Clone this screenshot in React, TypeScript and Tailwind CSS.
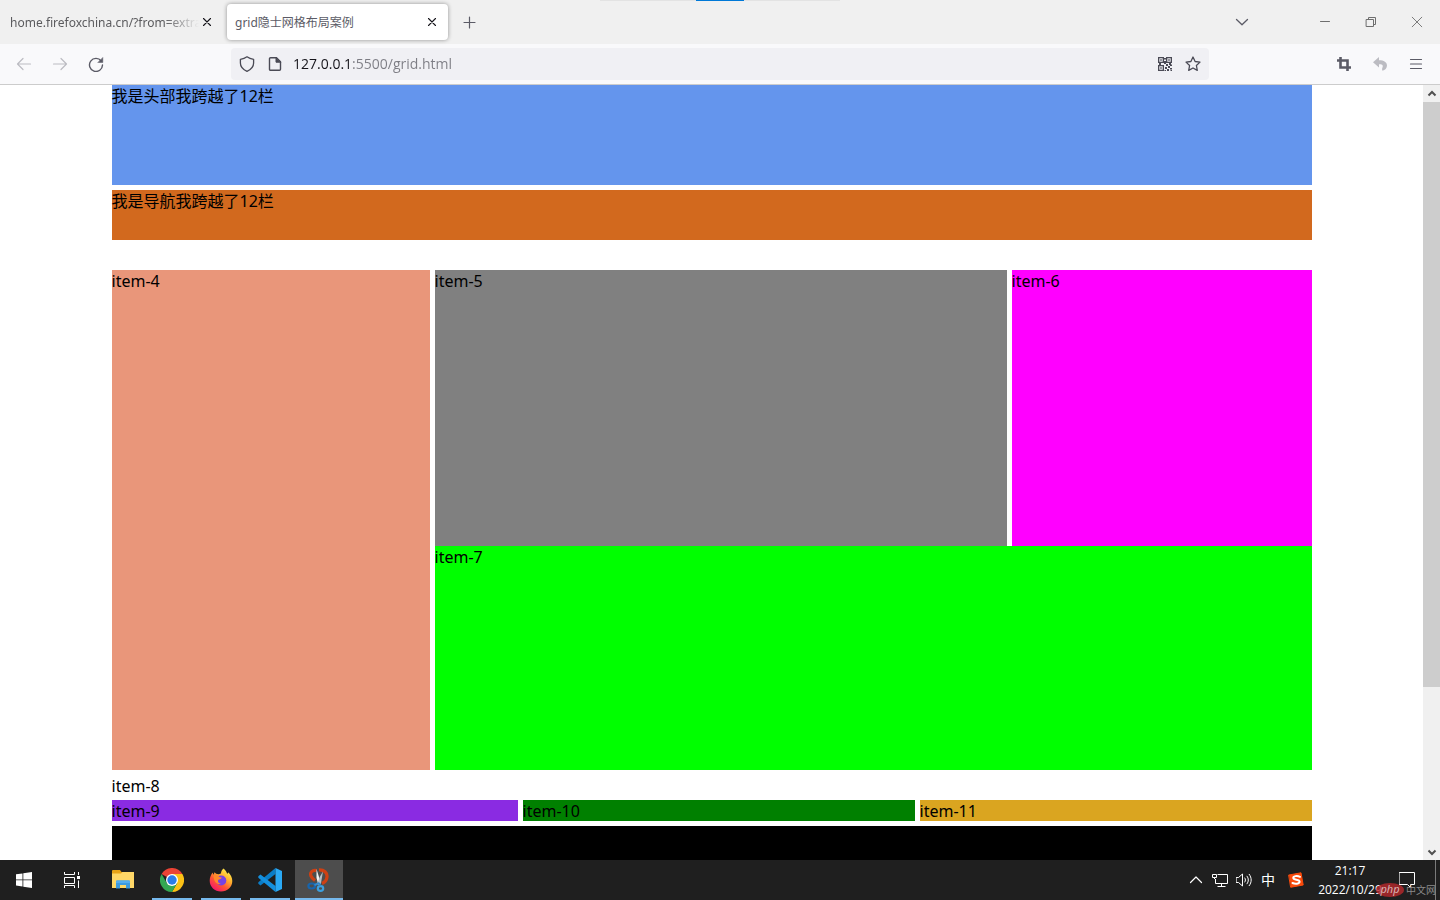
/**
 * Browser window on a desktop, showing a grid layout demo page.
 */

import React from 'react';

interface IconProps {
  className?: string;
  children: React.ReactNode;
  box?: string;
}

function Icon({ className = 'w-4 h-4', box = '0 0 16 16', children }: IconProps) {
  return (
    <svg
      className={className}
      viewBox={box}
      fill="none"
      stroke="currentColor"
      strokeLinecap="round"
      strokeLinejoin="round"
      aria-hidden="true"
    >
      {children}
    </svg>
  );
}

interface IconButtonProps {
  label: string;
  className?: string;
  children: React.ReactNode;
}

function IconButton({ label, className = '', children }: IconButtonProps) {
  return (
    <button type="button" aria-label={label} className={`flex shrink-0 items-center justify-center ${className}`}>
      {children}
    </button>
  );
}

function CloseMark() {
  return (
    <Icon>
      <path d="M4.5 4.500l7 7M11.500 4.500l-7 7" strokeWidth="1.1" />
    </Icon>
  );
}

/* Tabs and window controls */
function TabStrip() {
  return (
    <div className="relative flex h-11 shrink-0 items-center bg-[#f0f0f0]">
      <div className="absolute left-1/2 top-0 flex h-px w-60 -translate-x-1/2 justify-center bg-[#e3e3e3]">
        <div className="h-px w-12 bg-[#0078d7]" />
      </div>

      <div className="flex h-9 w-[223px] items-center pl-2.5 pr-2">
        <button
          type="button"
          className="min-w-0 flex-1 whitespace-nowrap pt-0.5 text-left text-xs text-[#5b5b5e] [mask-image:linear-gradient(to_right,black_82%,transparent)]"
        >
          home.firefoxchina.cn/?from=extra
        </button>
        <IconButton label="Close tab" className="w-4 text-[#15141a]">
          <CloseMark />
        </IconButton>
      </div>

      <div className="ml-1 flex h-9 w-[221px] items-center rounded bg-white px-2 shadow-[0_0_4px_rgba(0,0,0,0.4)]">
        <button type="button" className="min-w-0 flex-1 truncate pt-0.5 text-left text-xs text-[#5b5b66]">
          grid隐士网格布局案例
        </button>
        <IconButton label="Close tab" className="w-4 text-[#15141a]">
          <CloseMark />
        </IconButton>
      </div>

      <IconButton label="New tab" className="ml-[3px] h-9 w-9 text-[#5b5b66]">
        <Icon>
          <path d="M8.500 3v11M3 8.500h11" strokeWidth="1.2" />
        </Icon>
      </IconButton>

      <div className="flex-1" />

      <IconButton label="List all tabs" className="mr-[42px] h-9 w-9 text-[#5b5b66]">
        <Icon>
          <path d="M2.500 5.500L8 10.800l5.500-5.300" strokeWidth="1.3" />
        </Icon>
      </IconButton>
      <IconButton label="Minimize" className="h-9 w-[46px] text-[#6e6e6e]">
        <Icon>
          <path d="M3.500 7.500h9" />
        </Icon>
      </IconButton>
      <IconButton label="Restore" className="h-9 w-[46px] text-[#6e6e6e]">
        <Icon>
          <path d="M3.500 5.500h7v7h-7zM5.500 5V3.500h7v7H11" />
        </Icon>
      </IconButton>
      <IconButton label="Close" className="h-9 w-[46px] text-[#6e6e6e]">
        <Icon>
          <path d="M3.200 3.200l9.600 9.600M12.800 3.200l-9.600 9.600" strokeWidth="0.9" />
        </Icon>
      </IconButton>
    </div>
  );
}

function QrIcon() {
  return (
    <svg className="h-4 w-4" viewBox="0 0 16 16" fill="#4a4a55" aria-hidden="true">
      <path
        fillRule="evenodd"
        d="M1 1h6v6H1zM2.300 2.300v3.400h3.400V2.300zM9 1h6v6H9zM10.300 2.300v3.400h3.400V2.300zM1 9h6v6H1zM2.300 10.300v3.400h3.400v-3.400z"
      />
      <path d="M3.300 3.300h1.400v1.400H3.300zM11.300 3.300h1.400v1.400h-1.400zM3.300 11.300h1.400v1.400H3.300zM7 2h2v1.400H7zM7 5h2v3H7zM2 7h2v2H2zM12 7h2v2h-2zM9 8h2v2H9zM11 10h2v2h-2zM13 8.500h2V10h-2zM8 11h2v2H8zM10 13h2v2h-2zM13 12h2v1.500h-2zM7.500 14H9v1H7.500zM13.500 14H15v1h-1.500z" />
    </svg>
  );
}

function Toolbar() {
  return (
    <div className="flex h-[41px] shrink-0 items-center border-b border-[#cccccc] bg-[#f9f9fb] px-1.5">
      <IconButton label="Back" className="h-9 w-9 text-[#bcbcc2]">
        <Icon>
          <path d="M14.500 8H1.500M7 2.500L1.500 8 7 13.500" strokeWidth="1.2" />
        </Icon>
      </IconButton>
      <IconButton label="Forward" className="h-9 w-9 text-[#bcbcc2]">
        <Icon>
          <path d="M1.500 8h13M9 2.500L14.500 8 9 13.500" strokeWidth="1.2" />
        </Icon>
      </IconButton>
      <IconButton label="Reload" className="h-9 w-9 text-[#5b5b66]">
        <Icon>
          <path d="M13.200 5A6.500 6.500 0 1 0 14.500 9" strokeWidth="1.4" />
          <path d="M14.800 1.800v4.700h-4.700z" fill="currentColor" strokeWidth="0.5" />
        </Icon>
      </IconButton>

      <div className="ml-[117px] mr-[117px] flex h-8 flex-1 items-center rounded bg-[#f0f0f4] px-2 text-[#4a4a55]">
        <IconButton label="Tracking protection" className="w-4">
          <Icon>
            <path d="M8 .8C10 2.300 12.200 3 14.600 3.300V7c0 3.500-2.500 6.500-6.600 8.300C3.900 13.500 1.400 10.500 1.400 7V3.300C3.800 3 6 2.300 8 .8z" strokeWidth="1.3" />
          </Icon>
        </IconButton>
        <IconButton label="Site information" className="ml-3 w-4">
          <Icon>
            <path d="M3.500 1.700h6l4 4v7.600a1 1 0 0 1-1 1h-9a1 1 0 0 1-1-1V2.700a1 1 0 0 1 1-1z" strokeWidth="1.4" />
            <path d="M9 1.700v4.500h4.500z" fill="currentColor" strokeWidth="1" />
          </Icon>
        </IconButton>
        <input
          type="text"
          aria-label="Address"
          defaultValue="127.0.0.1:5500/grid.html"
          className="ml-2.5 h-8 min-w-0 flex-1 bg-[linear-gradient(to_right,#15141a_58px,#7d7d84_58px)] bg-clip-text pb-0.5 font-['Open_Sans','Noto_Sans',sans-serif] text-sm text-transparent outline-none"
        />
        <IconButton label="QR code" className="w-4">
          <QrIcon />
        </IconButton>
        <IconButton label="Bookmark this page" className="ml-3 w-4">
          <Icon>
            <path d="M8 1l2.100 4.500 4.900.6-3.600 3.400.9 4.900L8 12l-4.300 2.400.9-4.900L1 6.100l4.900-.6z" strokeWidth="1.3" />
          </Icon>
        </IconButton>
      </div>

      <IconButton label="Screenshot" className="h-9 w-9 text-[#5b5b66]">
        <Icon>
          <path d="M4.500 1v10.500H15M1 4.500h10.500V15" strokeWidth="2.600" strokeLinecap="butt" strokeLinejoin="miter" />
        </Icon>
      </IconButton>
      <IconButton label="Undo close tab" className="h-9 w-9 text-[#bcbcc2]">
        <svg className="h-4 w-4" viewBox="0 0 16 16" fill="currentColor" aria-hidden="true">
          <path d="M7 1L1 6.300l6 5.200V8.300c3.500-.2 4.600 1.200 3.200 4-.3.900-.2 1.800.3 2.500 2.600-.5 4.500-2.600 4.500-5.200C15 6.300 12 4.300 7 4.300z" />
        </svg>
      </IconButton>
      <IconButton label="Open application menu" className="h-9 w-9 text-[#5b5b66]">
        <Icon>
          <path d="M2.500 3.500h11M2.500 8h11M2.500 12.500h11" strokeWidth="1.2" />
        </Icon>
      </IconButton>
    </div>
  );
}

/* The demo page itself */
function GridPage() {
  return (
    <main className="min-w-0 flex-1 overflow-hidden bg-white text-base leading-[23px] text-black">
      <div className="mx-auto flex w-full max-w-[1200px] flex-col gap-[5px]">
        <header className="h-[100px] bg-[#6495ed]">我是头部我跨越了12栏</header>
        <nav className="h-[50px] bg-[#d2691e]">我是导航我跨越了12栏</nav>
        <div className="h-5" />
        <div className="grid h-[500px] grid-cols-[318fr_572fr_300fr] grid-rows-[276px_224px] gap-x-[5px]">
          <div className="row-span-2 bg-[#e9967a]">item-4</div>
          <div className="bg-[#808080]">item-5</div>
          <div className="bg-[#ff00ff]">item-6</div>
          <div className="col-span-2 bg-[#00ff00]">item-7</div>
        </div>
        <div className="h-5">item-8</div>
        <div className="grid h-[21px] grid-cols-[406fr_392fr_392fr] grid-rows-[21px] gap-[5px]">
          <div className="bg-[#8a2be2]">item-9</div>
          <div className="bg-[#008000]">item-10</div>
          <div className="bg-[#daa520]">item-11</div>
        </div>
        <footer className="h-[300px] bg-black" />
      </div>
    </main>
  );
}

function Scrollbar() {
  return (
    <div className="flex w-[17px] shrink-0 flex-col bg-[#f0f0f0] text-[#505050]">
      <IconButton label="Scroll up" className="h-[17px]">
        <Icon className="h-3 w-3" box="0 0 12 12">
          <path d="M2.500 7.500L6 4l3.500 3.500" strokeWidth="2" strokeLinecap="butt" strokeLinejoin="miter" />
        </Icon>
      </IconButton>
      <div className="flex flex-1 flex-col">
        <div className="basis-[79%] bg-[#cdcdcd]" />
      </div>
      <IconButton label="Scroll down" className="h-[17px]">
        <Icon className="h-3 w-3" box="0 0 12 12">
          <path d="M2.500 4.500L6 8l3.500-3.500" strokeWidth="2" strokeLinecap="butt" strokeLinejoin="miter" />
        </Icon>
      </IconButton>
    </div>
  );
}

/* Taskbar app icons */
function WindowsIcon() {
  return (
    <svg className="h-4 w-4" viewBox="0 0 16 16" fill="#fff" aria-hidden="true">
      <path d="M0 2.300l6.500-.9v6.100H0zM7.300 1.300L16 0v7.500H7.300zM0 8.300h6.500v6.200L0 13.600zM7.300 8.300H16V16l-8.700-1.300z" />
    </svg>
  );
}

function TaskViewIcon() {
  return (
    <svg className="h-4 w-4" viewBox="0 0 16 16" fill="none" stroke="#fff" aria-hidden="true">
      <path d="M.5 0v2.500h10V0M.5 5.500h10v6H.5zM.5 16v-2.500h10V16M14.500 0v3M14.500 8.500V16" />
      <path d="M13 4h3v3h-3z" fill="#fff" stroke="none" />
    </svg>
  );
}

function FolderIcon() {
  return (
    <svg className="h-6 w-6" viewBox="0 0 24 24" aria-hidden="true">
      <path d="M1 3a1 1 0 0 1 1-1h7l1.500 2H23v16H1z" fill="#e8a317" />
      <path d="M1 5.500h9L11.500 4H23v16H1z" fill="#ffd767" />
      <path d="M5 20.500v-7a1 1 0 0 1 1-1h12a1 1 0 0 1 1 1v7h-4V17H9v3.500z" fill="#3d9be0" />
      <path d="M5 13.500a1 1 0 0 1 1-1h12a1 1 0 0 1 1 1V15H5z" fill="#54adf0" />
    </svg>
  );
}

function ChromeIcon() {
  return (
    <svg className="h-6 w-6" viewBox="0 0 24 24" aria-hidden="true">
      <path d="M12 12L1.600 6A12 12 0 0 1 22.400 6z" fill="#ea4335" />
      <path d="M12 12V6h10.400A12 12 0 0 1 12 24l5.200-9z" fill="#fbc116" />
      <path d="M12 12l5.200 3L12 24A12 12 0 0 1 1.600 6l5.200 9z" fill="#34a853" />
      <circle cx="12" cy="12" r="6" fill="#fff" />
      <circle cx="12" cy="12" r="4.700" fill="#2b7de9" />
    </svg>
  );
}

function FirefoxIcon() {
  return (
    <svg className="h-6 w-6" viewBox="0 0 24 24" aria-hidden="true">
      <defs>
        <linearGradient id="fox" x1="0.850" y1="0.050" x2="0.200" y2="0.950">
          <stop offset="0" stopColor="#fff44f" />
          <stop offset="0.350" stopColor="#ffb02e" />
          <stop offset="0.650" stopColor="#ff5634" />
          <stop offset="1" stopColor="#f5156c" />
        </linearGradient>
      </defs>
      <path
        d="M14.500.5c2 1.400 3 3.500 3.600 5.200.8-.2 1.200-1 1.200-1.500 2.400 2.300 4 5.500 4 8.800C23.300 19 18.300 23.500 12 23.500S.7 18.700.7 12.700C.7 9.500 2 6.500 3.600 4.500l.7 2.300C5 5.800 5.300 5 5.500 4.200 6.500 5.300 8 6.300 9.500 6.200 11 6.200 12 5.500 12 5c.2-1.800 1-3.400 2.500-4.500z"
        fill="url(#fox)"
      />
      <circle cx="12.300" cy="12.500" r="5" fill="#7542e5" />
      <path d="M4.500 7.500c2.500-.5 4.500.3 6.500 1.800l1.800.2c-.4 1.700-2.500 1.800-3.600 2.300-.8 2 .5 3.700 2.600 4-3.800 1-7-1.600-7.300-8.300z" fill="#ff8a2a" />
    </svg>
  );
}

function CodeIcon() {
  return (
    <svg className="h-6 w-6" viewBox="0 0 24 24" aria-hidden="true">
      <path d="M17.500 6L2.500 17.500.300 15.700v-1.400L17.500 0z" fill="#0a7dc8" />
      <path d="M17.500 18L2.500 6.500.300 8.300v1.400L17.500 24z" fill="#1490df" />
      <path d="M17.500 0L24 3v18l-6.500 3z" fill="#2aa9f5" />
    </svg>
  );
}

function SnipIcon() {
  return (
    <svg className="h-6 w-6" viewBox="0 0 24 24" fill="none" aria-hidden="true">
      <path d="M9.500 2.500C5.500 1.500 2.500 4.500 4 8c.8 1.800 2.300 3.300 4 4.500M12 1.800c5-.3 8.500 3 8 7.200-.4 3.200-2.500 5.500-5 6.500" stroke="#cf4013" strokeWidth="3.200" />
      <path d="M9.500 1l4.500 14.500-2.500 1.500-2-7z" fill="#f1f1f1" />
      <path d="M16 3.500L14 15l-4.500 2 3.500-8.500z" fill="#b5bcc2" />
      <ellipse cx="4.700" cy="18" rx="3.300" ry="2.500" stroke="#1765ad" strokeWidth="2.200" />
      <ellipse cx="13.500" cy="20.500" rx="2.700" ry="2.300" stroke="#3ba0e0" strokeWidth="2.200" />
      <path d="M7.500 17l5-2M13 18l-.5-3" stroke="#3088cc" strokeWidth="2" />
    </svg>
  );
}

interface TaskApp {
  name: string;
  icon: React.ReactNode;
  state: 'idle' | 'running' | 'active';
}

const APPS: TaskApp[] = [
  { name: 'File Explorer', icon: <FolderIcon />, state: 'idle' },
  { name: 'Chrome', icon: <ChromeIcon />, state: 'running' },
  { name: 'Firefox', icon: <FirefoxIcon />, state: 'running' },
  { name: 'Visual Studio Code', icon: <CodeIcon />, state: 'running' },
  { name: 'Snipping Tool', icon: <SnipIcon />, state: 'active' },
];

function TaskButton({ app }: { app: TaskApp }) {
  const getUnderline = () => {
    switch (app.state) {
      case 'active': return 'w-12 bg-[#76b9ed]';
      case 'running': return 'w-10 bg-[#76b9ed]';
      default: return 'w-10';
    }
  };

  return (
    <button
      type="button"
      aria-label={app.name}
      className={`flex h-10 w-12 flex-col items-center ${app.state === 'active' ? 'bg-[#4d4d4d]' : ''}`}
    >
      <span className="flex h-[38px] items-center pt-0.5">{app.icon}</span>
      <span className={`h-0.5 ${getUnderline()}`} />
    </button>
  );
}

function Taskbar() {
  return (
    <div className="relative flex h-10 shrink-0 items-center bg-[#1f1f1f] text-white">
      <IconButton label="Start" className="h-10 w-12">
        <WindowsIcon />
      </IconButton>
      <IconButton label="Task view" className="h-10 w-12">
        <TaskViewIcon />
      </IconButton>
      <div className="ml-[3px] flex gap-px">
        {APPS.map((app) => (
          <TaskButton key={app.name} app={app} />
        ))}
      </div>

      <div className="flex-1" />

      <IconButton label="Show hidden icons" className="h-10 w-6">
        <Icon>
          <path d="M2.500 10.500L8 5l5.500 5.500" strokeWidth="1.2" />
        </Icon>
      </IconButton>
      <IconButton label="Network" className="h-10 w-6">
        <Icon>
          <path d="M5.500 2.500h10v9H3.500V7M9.500 11.500v3M5.500 14.500h8M.5 2.500h4v3h-4zM2.500 5.500v1.500" strokeLinecap="butt" strokeLinejoin="miter" />
        </Icon>
      </IconButton>
      <IconButton label="Volume" className="h-10 w-6">
        <Icon>
          <path d="M.5 5.500h2L6.500 2v12l-4-3.500h-2zM8.800 6c.9 1.200.9 2.800 0 4M11 4.200c1.800 2.300 1.800 5.300 0 7.600M13.200 2.300c2.700 3.500 2.700 7.900 0 11.400" />
        </Icon>
      </IconButton>
      <button type="button" className="h-10 w-6 text-sm">中</button>
      <IconButton label="Sogou input" className="h-10 w-8">
        <Icon>
          <path d="M1 3L13 .8 15.200 13 3 15.200z" fill="#fa4b0c" stroke="#fa4b0c" />
          <path d="M12 4.800C9 3.300 5 4 5.300 6.200c.3 2 6.300 1 6.300 3.400 0 2.400-4.500 2.600-7.100 1.400" stroke="#fff" strokeWidth="2" />
        </Icon>
      </IconButton>
      <button
        type="button"
        className="flex h-10 w-[76px] flex-col items-center justify-center whitespace-nowrap font-['Open_Sans','Noto_Sans',sans-serif] text-xs leading-[19px]"
      >
        <span>21:17</span>
        <span>2022/10/29</span>
      </button>
      <IconButton label="Notifications" className="h-10 w-[38px]">
        <Icon>
          <path d="M.5 .5h15v12h-4v3l-3-3h-8z" strokeLinejoin="miter" />
        </Icon>
      </IconButton>
      <button type="button" aria-label="Show desktop" className="ml-[9px] h-10 w-[5px] border-l border-[#7a7a7a]" />

      {/* Site badge over the clock */}
      <div className="pointer-events-none absolute bottom-0 right-1 flex h-5 items-center gap-0.5 text-[#8a8a8a]">
        <span className="flex h-3.5 w-7 items-center justify-center rounded-[50%] bg-[#b8282c]/80 pb-0.5 text-[11px] italic text-[#d9b5b5]">
          php
        </span>
        <span className="text-[10px]">中文网</span>
      </div>
    </div>
  );
}

export default function App() {
  return (
    <div className="flex h-screen flex-col overflow-hidden font-['Noto_Sans','Noto_Sans_CJK_SC',sans-serif]">
      <TabStrip />
      <Toolbar />
      <div className="flex min-h-0 flex-1">
        <GridPage />
        <Scrollbar />
      </div>
      <Taskbar />
    </div>
  );
}
